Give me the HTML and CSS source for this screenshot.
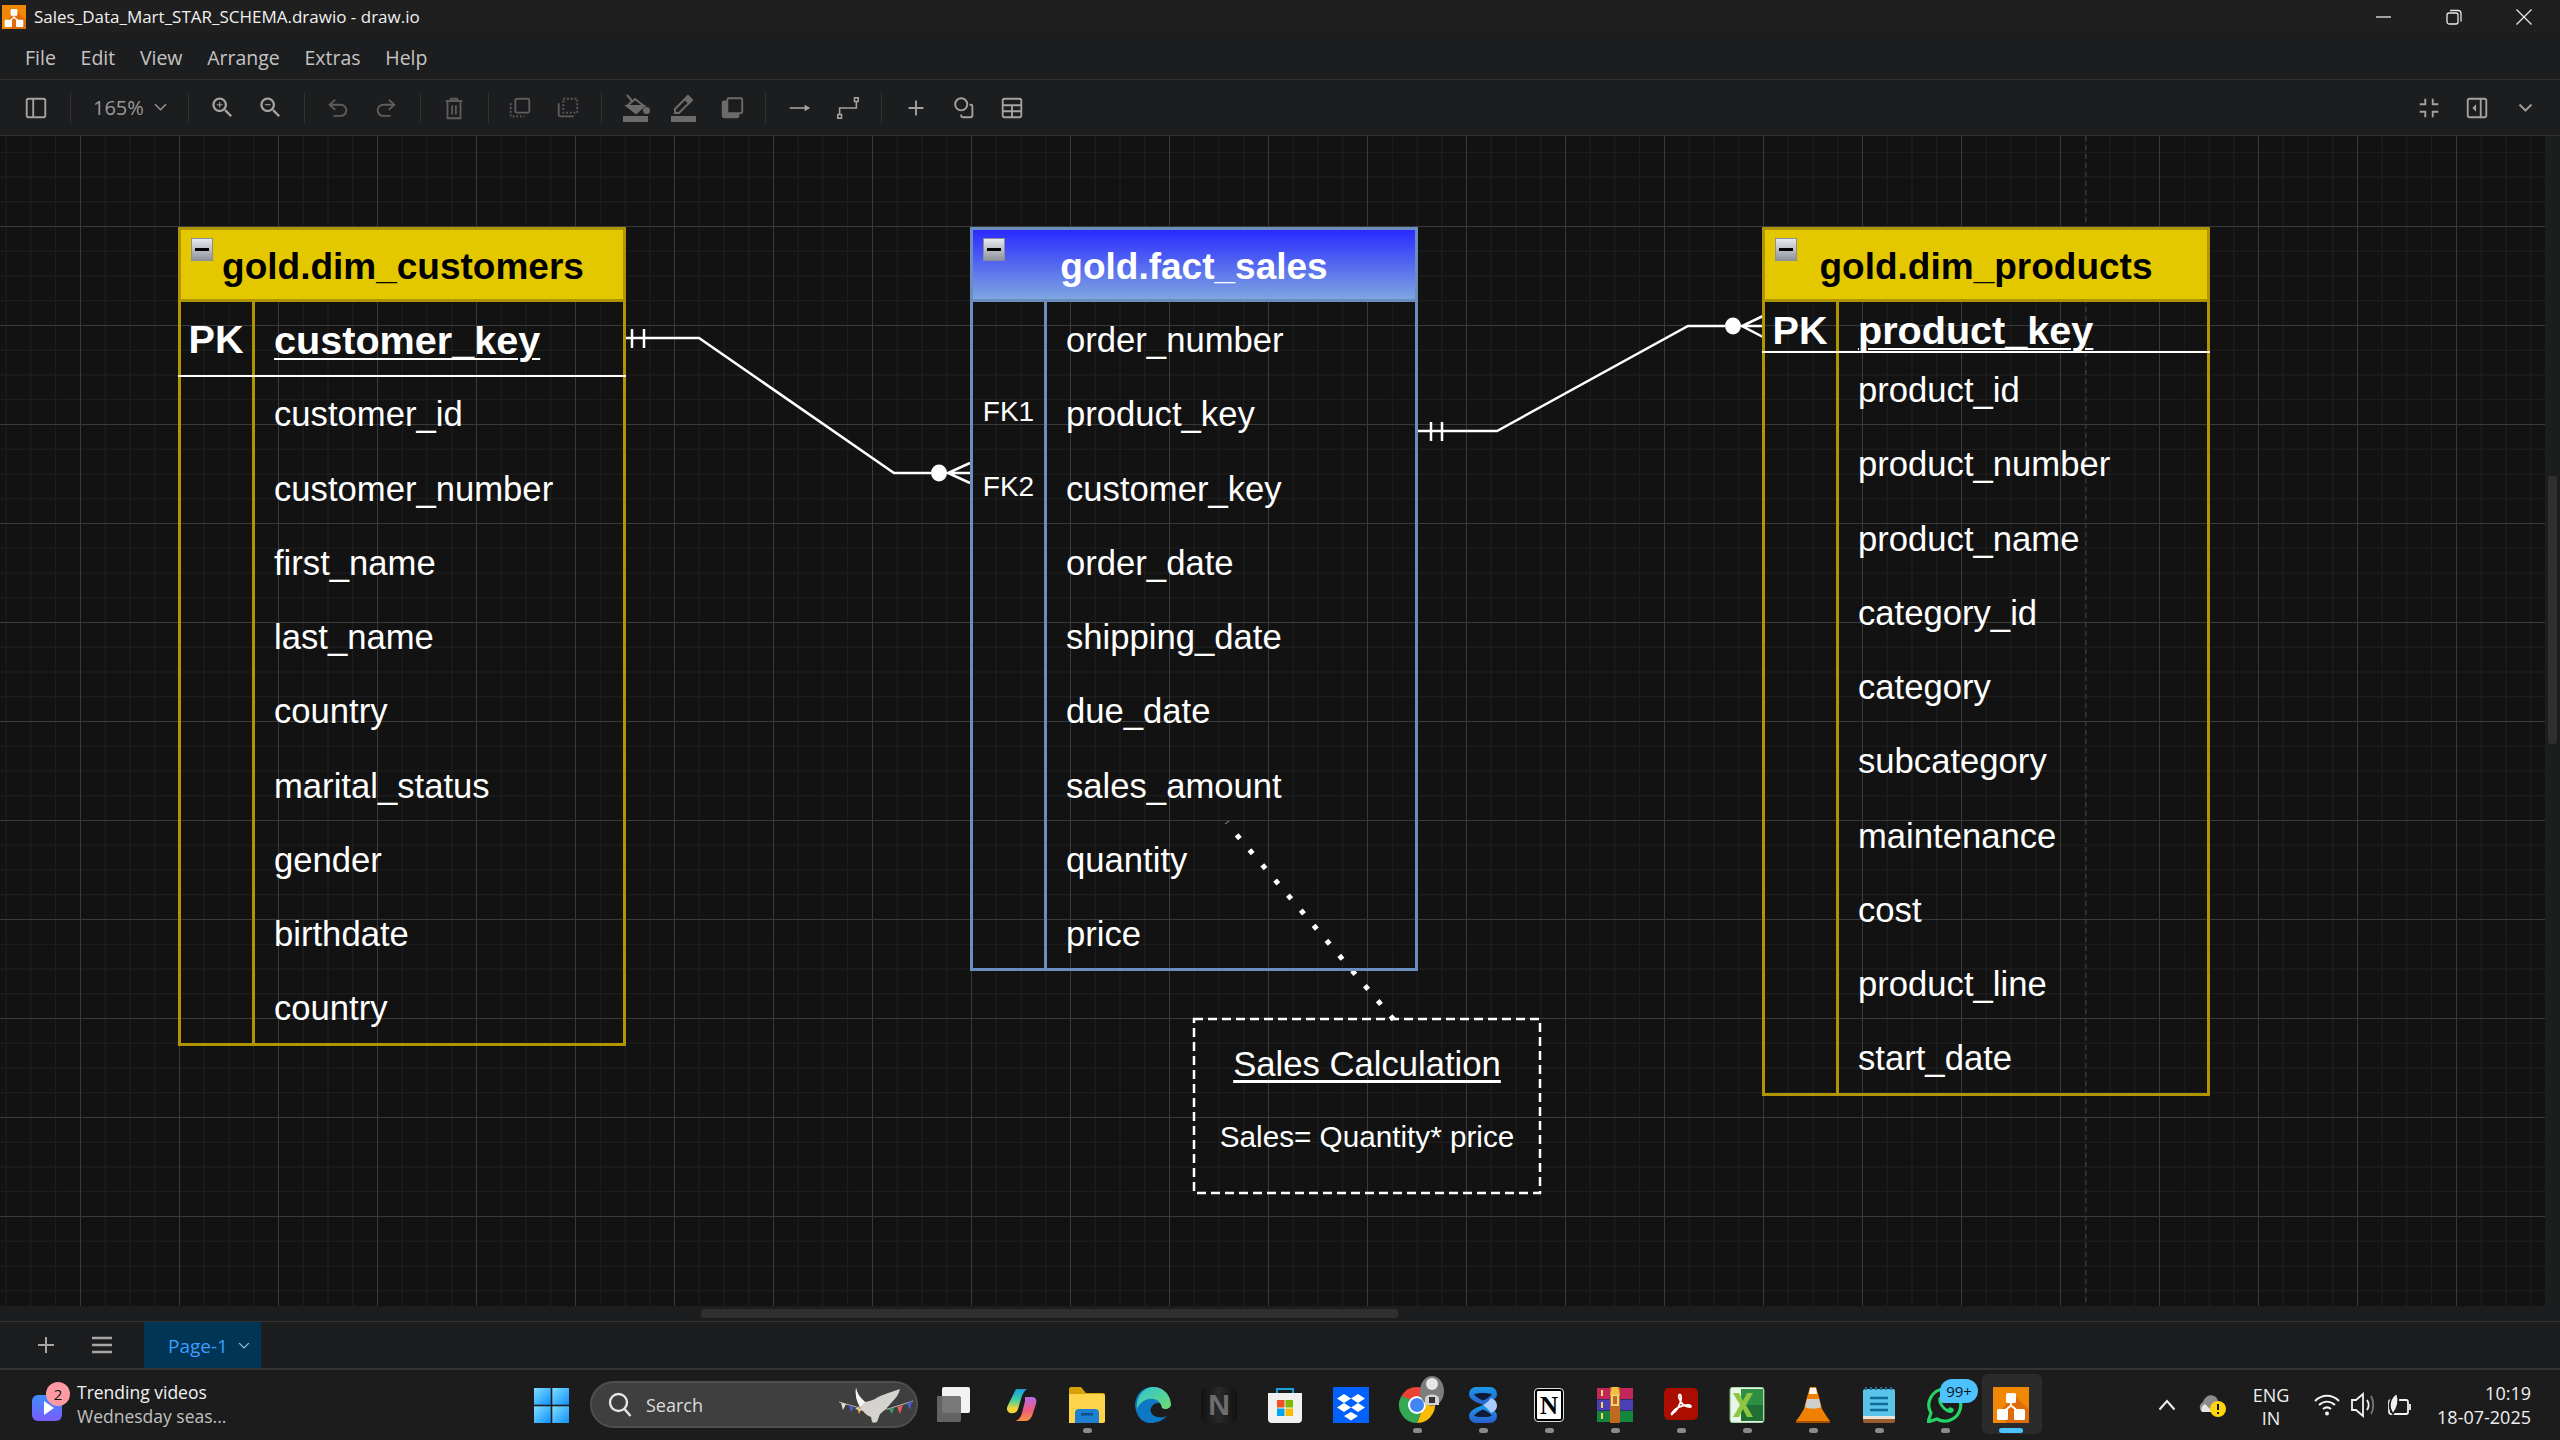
FILE: index.html
```html
<!DOCTYPE html>
<html lang="en">
<head>
<meta charset="utf-8">
<title>Sales_Data_Mart_STAR_SCHEMA.drawio - draw.io</title>
<link rel="stylesheet" href="styles.css">
</head>
<body>
<svg class="defs" width="0" height="0" aria-hidden="true">
  <defs>
    <symbol id="drawio" viewBox="0 0 36 36">
      <rect width="36" height="36" fill="#f08705"/>
      <path d="M36 36H14L5 27 15 15 18 5 36 23z" fill="#df6c0c"/>
      <path d="M18 12v6.500M18 18.500 10 25M18 18.500 26 25" stroke="#fff" stroke-width="1.800" fill="none"/>
      <rect x="13" y="6" width="10" height="10" rx="1.500" fill="#fff"/>
      <rect x="4" y="22" width="11" height="11" rx="1.500" fill="#fff"/>
      <rect x="21" y="22" width="11" height="11" rx="1.500" fill="#fff"/>
    </symbol>
    <linearGradient id="winlogo" x1="0" y1="0" x2="1" y2="1"><stop offset="0" stop-color="#7fe0ff"/><stop offset="1" stop-color="#0f8fff"/></linearGradient>
    <linearGradient id="copilotA" x1="0" y1="0" x2="0" y2="1"><stop offset="0" stop-color="#1b9de2"/><stop offset=".45" stop-color="#3fd0a0"/><stop offset=".8" stop-color="#f5d33b"/></linearGradient>
    <linearGradient id="copilotB" x1="0" y1="0" x2="0" y2="1"><stop offset="0" stop-color="#b56ce8"/><stop offset=".55" stop-color="#ef5c7a"/><stop offset="1" stop-color="#f8913c"/></linearGradient>
    <linearGradient id="edgeA" x1="0" y1="0" x2="1" y2="1"><stop offset="0" stop-color="#2fc3d8"/><stop offset="1" stop-color="#6fdc6c"/></linearGradient>
    <linearGradient id="blueX" x1="0" y1="0" x2="0" y2="1"><stop offset="0" stop-color="#1a9be8"/><stop offset="1" stop-color="#2a5fd0"/></linearGradient>
    <linearGradient id="newsG" x1="0" y1="0" x2="0" y2="1"><stop offset="0" stop-color="#3f8cff"/><stop offset="1" stop-color="#7a5cff"/></linearGradient>
  </defs>
</svg>

<div class="app">
  <header class="titlebar">
    <svg class="app-ico"><use href="#drawio"/></svg>
    <span class="title-text">Sales_Data_Mart_STAR_SCHEMA.drawio - draw.io</span>
    <div class="win-ctrls">
      <span class="win-btn"><svg width="16" height="16" viewBox="0 0 16 16"><path d="M0 8h15" stroke="#e8e8e8" stroke-width="1.300"/></svg></span>
      <span class="win-btn"><svg width="16" height="16" viewBox="0 0 16 16" fill="none" stroke="#e8e8e8" stroke-width="1.300"><rect x="1" y="4" width="11" height="11" rx="2"/><path d="M4 1.500h8a3 3 0 0 1 3 3v8"/></svg></span>
      <span class="win-btn"><svg width="16" height="16" viewBox="0 0 16 16"><path d="M.5.500l15 15M15.500.500l-15 15" stroke="#e8e8e8" stroke-width="1.300"/></svg></span>
    </div>
  </header>

  <nav class="menubar">
    <span class="menu-item">File</span>
    <span class="menu-item">Edit</span>
    <span class="menu-item">View</span>
    <span class="menu-item">Arrange</span>
    <span class="menu-item">Extras</span>
    <span class="menu-item">Help</span>
  </nav>

  <div class="toolbar">
    <span class="tb on"><svg viewBox="0 0 28 28" class="i"><rect x="4" y="4" width="20" height="20" rx="2"/><path d="M11 4v20"/></svg></span>
    <span class="sep"></span>
    <span class="zoom-label">165%<svg viewBox="0 0 14 10" class="chev"><path d="M1 1.500l6 6 6-6"/></svg></span>
    <span class="sep"></span>
    <span class="tb on"><svg viewBox="0 0 24 24" class="i f"><path d="M15.500 14h-.79l-.28-.27C15.410 12.590 16 11.110 16 9.500 16 5.910 13.090 3 9.500 3S3 5.910 3 9.500 5.910 16 9.500 16c1.610 0 3.090-.59 4.230-1.570l.27.28v.79l5 4.990L20.490 19l-4.990-5zm-6 0C7.010 14 5 11.990 5 9.500S7.010 5 9.500 5 14 7.010 14 9.500 11.990 14 9.500 14z"/><path d="M12 10h-2v2H9v-2H7V9h2V7h1v2h2v1z"/></svg></span>
    <span class="tb on"><svg viewBox="0 0 24 24" class="i f"><path d="M15.500 14h-.79l-.28-.27C15.410 12.590 16 11.110 16 9.500 16 5.910 13.090 3 9.500 3S3 5.910 3 9.500 5.910 16 9.500 16c1.610 0 3.090-.59 4.230-1.570l.27.28v.79l5 4.990L20.490 19l-4.990-5zm-6 0C7.010 14 5 11.990 5 9.500S7.010 5 9.500 5 14 7.010 14 9.500 11.990 14 9.500 14z"/><path d="M7 9h5v1H7z"/></svg></span>
    <span class="sep"></span>
    <span class="tb off"><svg viewBox="0 0 28 28" class="i"><path d="M11 5 5 10.500 11 16M5 10.500h12a6 6 0 0 1 0 12H9"/></svg></span>
    <span class="tb off"><svg viewBox="0 0 28 28" class="i"><path d="M17 5l6 5.500L17 16M23 10.500H11a6 6 0 0 0 0 12h8"/></svg></span>
    <span class="sep"></span>
    <span class="tb off"><svg viewBox="0 0 28 28" class="i"><path d="M5 6.500h18M10.500 6.500V4h7v2.500M7 6.500V25h14V6.500M12 11v10M16 11v10"/></svg></span>
    <span class="sep tight"></span>
    <span class="tb off"><svg viewBox="0 0 28 28" class="i"><rect x="9" y="4" width="15" height="15" rx="2"/><path class="dots" d="M4 9v14h15"/></svg></span>
    <span class="tb off"><svg viewBox="0 0 28 28" class="i"><rect class="dots" x="9" y="4" width="15" height="15"/><path d="M4 9v12a2 2 0 0 0 2 2h14"/></svg></span>
    <span class="sep"></span>
    <span class="tb on dim"><svg viewBox="0 0 28 28" class="i tall"><path d="M5 1l5 6"/><path d="M13 5 22 12 14 19 5 12z"/><path class="fillc" d="M5 12h17l-8 7z"/><circle class="fillc" cx="24.500" cy="16.500" r="2.500"/><rect class="fillc" x="2" y="23" width="23" height="4"/></svg></span>
    <span class="tb on dim"><svg viewBox="0 0 28 28" class="i tall"><path d="M5 19v-4L17 3l4 4L9 19z"/><path class="fillc" d="M15 5l4 4 3-3-4-4z"/><rect class="fillc" x="2" y="23" width="23" height="4"/></svg></span>
    <span class="tb on dim"><svg viewBox="0 0 28 28" class="i"><path class="fillc nost" d="M3 8a2 2 0 0 1 2-2h4v14h13v2a3 3 0 0 1-3 3H6a3 3 0 0 1-3-3z"/><rect x="9" y="3.500" width="16" height="16" rx="1.500"/></svg></span>
    <span class="sep"></span>
    <span class="tb on"><svg viewBox="0 0 28 28" class="i thin"><path d="M3 14h20"/><path class="fillc nost" d="M19 10.500l6 3.500-6 3.500z"/></svg></span>
    <span class="tb on"><svg viewBox="0 0 28 28" class="i thin"><rect x="3" y="21" width="4" height="4"/><rect x="21" y="3" width="4" height="4"/><path d="M5 21v-7h18V7"/></svg></span>
    <span class="sep"></span>
    <span class="tb on"><svg viewBox="0 0 28 28" class="i"><path d="M14 6v16M6 14h16"/></svg></span>
    <span class="tb on"><svg viewBox="0 0 28 28" class="i"><circle cx="11" cy="10" r="6.500"/><path d="M20 10.500h1.500a1.500 1.500 0 0 1 1.500 1.500v10a2 2 0 0 1-2 2h-8a2 2 0 0 1-2-2v-1"/></svg></span>
    <span class="tb on"><svg viewBox="0 0 28 28" class="i"><rect x="4" y="4" width="20" height="20" rx="2"/><path d="M4 11h20M4 17.500h20M14 11v13"/></svg></span>

    <div class="toolbar-right">
      <span class="tb on"><svg viewBox="0 0 28 28" class="i"><path d="M4 10h6V4M24 10h-6V4M4 18h6v6M24 18h-6v6"/></svg></span>
      <span class="tb on"><svg viewBox="0 0 28 28" class="i"><rect x="4" y="4" width="20" height="20" rx="2"/><path d="M18 4v20"/><path class="fillc nost" d="M13 10v8l-4-4z"/></svg></span>
      <span class="tb on"><svg viewBox="0 0 14 10" class="chev big"><path d="M1 1.500l6 6 6-6"/></svg></span>
    </div>
  </div>

  <main class="main">
    <div class="canvas">
      <svg class="wires" viewBox="0 136 2545 1170">
        <path class="page-break" d="M2086 136V1306"/>
        <g class="wire">
          <path d="M626 338H699L894 473H931"/>
          <path d="M632 329V348M644 329V348"/>
          <ellipse class="dot" cx="939" cy="473" rx="8" ry="8.500"/>
          <path d="M970 463 948 473 970 483M947 473H970"/>
          <path d="M1418 431H1497L1688 326H1725"/>
          <path d="M1431 422V441M1442 422V441"/>
          <ellipse class="dot" cx="1733" cy="326" rx="8" ry="8.500"/>
          <path d="M1763 316 1742 326 1763 337M1741 326H1763"/>
        </g>
        <path class="dotted" d="M1236 834 1395 1021"/>
        <path class="fleck" d="M1225 824l4-3"/>
        <rect class="note-box" x="1194" y="1019" width="346" height="174"/>
      </svg>

      <section class="tbl dim t-cust">
        <div class="tbl-head"><span class="collapse"></span>gold.dim_customers</div>
        <div class="rows">
          <div class="row pk"><span class="key">PK</span><span class="name">customer_key</span></div>
          <div class="row"><span class="key"></span><span class="name">customer_id</span></div>
          <div class="row"><span class="key"></span><span class="name">customer_number</span></div>
          <div class="row"><span class="key"></span><span class="name">first_name</span></div>
          <div class="row"><span class="key"></span><span class="name">last_name</span></div>
          <div class="row"><span class="key"></span><span class="name">country</span></div>
          <div class="row"><span class="key"></span><span class="name">marital_status</span></div>
          <div class="row"><span class="key"></span><span class="name">gender</span></div>
          <div class="row"><span class="key"></span><span class="name">birthdate</span></div>
          <div class="row"><span class="key"></span><span class="name">country</span></div>
        </div>
      </section>

      <section class="tbl fact t-fact">
        <div class="tbl-head"><span class="collapse"></span>gold.fact_sales</div>
        <div class="rows">
          <div class="row"><span class="key"></span><span class="name">order_number</span></div>
          <div class="row"><span class="key fk">FK1</span><span class="name">product_key</span></div>
          <div class="row"><span class="key fk">FK2</span><span class="name">customer_key</span></div>
          <div class="row"><span class="key"></span><span class="name">order_date</span></div>
          <div class="row"><span class="key"></span><span class="name">shipping_date</span></div>
          <div class="row"><span class="key"></span><span class="name">due_date</span></div>
          <div class="row"><span class="key"></span><span class="name">sales_amount</span></div>
          <div class="row"><span class="key"></span><span class="name">quantity</span></div>
          <div class="row"><span class="key"></span><span class="name">price</span></div>
        </div>
      </section>

      <section class="tbl dim t-prod">
        <div class="tbl-head"><span class="collapse"></span>gold.dim_products</div>
        <div class="rows">
          <div class="row pk short"><span class="key">PK</span><span class="name">product_key</span></div>
          <div class="row"><span class="key"></span><span class="name">product_id</span></div>
          <div class="row"><span class="key"></span><span class="name">product_number</span></div>
          <div class="row"><span class="key"></span><span class="name">product_name</span></div>
          <div class="row"><span class="key"></span><span class="name">category_id</span></div>
          <div class="row"><span class="key"></span><span class="name">category</span></div>
          <div class="row"><span class="key"></span><span class="name">subcategory</span></div>
          <div class="row"><span class="key"></span><span class="name">maintenance</span></div>
          <div class="row"><span class="key"></span><span class="name">cost</span></div>
          <div class="row"><span class="key"></span><span class="name">product_line</span></div>
          <div class="row"><span class="key"></span><span class="name">start_date</span></div>
        </div>
      </section>

      <div class="note">
        <div class="note-title">Sales Calculation</div>
        <div class="note-body">Sales= Quantity* price</div>
      </div>
    </div>
    <div class="vstrip"><span class="vthumb"></span></div>
  </main>

  <div class="hstrip"><span class="hthumb"></span></div>

  <div class="tabs">
    <span class="tab-btn"><svg viewBox="0 0 20 20" width="20" height="20"><path d="M10 2v16M2 10h16" stroke="#a6a6a6" stroke-width="2"/></svg></span>
    <span class="tab-btn"><svg viewBox="0 0 22 20" width="22" height="20"><path d="M1 3h20M1 10h20M1 17h20" stroke="#a6a6a6" stroke-width="2.400"/></svg></span>
    <span class="page-tab">Page-1<svg viewBox="0 0 14 10" class="chev tabchev"><path d="M1 1.500l6 6 6-6"/></svg></span>
  </div>

  <footer class="taskbar">
    <div class="news">
      <span class="news-ico">
        <svg width="30" height="26" viewBox="0 0 30 26"><rect width="30" height="26" rx="6" fill="url(#newsG)"/><path d="M12 6l10 7-10 7z" fill="#fff"/></svg>
        <span class="news-badge">2</span>
      </span>
      <span class="news-text"><span class="news-a">Trending videos</span><span class="news-b">Wednesday seas...</span></span>
    </div>
    <svg class="winlogo" viewBox="0 0 35 35"><rect width="16.700" height="16.700" fill="url(#winlogo)"/><rect x="18.300" width="16.700" height="16.700" fill="url(#winlogo)"/><rect y="18.300" width="16.700" height="16.700" fill="url(#winlogo)"/><rect x="18.300" y="18.300" width="16.700" height="16.700" fill="url(#winlogo)"/></svg>
    <div class="search">
      <svg width="26" height="28" viewBox="0 0 26 28" fill="none" stroke="#e6e6e6" stroke-width="2.400"><circle cx="11.500" cy="11.500" r="8.500"/><path d="M17.500 18l6 7"/></svg>
      <span class="search-text">Search</span>
      <svg class="dove" width="76" height="36" viewBox="0 0 76 36">
        <path d="M1 14 22 20 50 21 75 13" fill="none" stroke="#bbb" stroke-width="1"/>
        <path d="M3 15l2 7 3-6z" fill="#e8e0d0"/><path d="M11 17l2 7 3-5z" fill="#4a5bd0"/><path d="M19 19l2 7 3-6z" fill="#f0b030"/>
        <path d="M51 21l3 5 2-6z" fill="#3aa060"/><path d="M59 19l3 7 3-9z" fill="#e05a5a"/><path d="M69 15l3 7 2-9z" fill="#4a5bd0"/>
        <path d="M18 0c1 5 4 10 9 14 5-1 9-2 13-5 6-3 14-5 22-8-1 5-4 9-8 13-4 5-8 9-12 12l-3 8c-2 1-4 1-5 0l-1-5c-3-1-6-3-8-6l-4-1-4-1 5-3c-3-4-5-11-4-18z" fill="#d4d3ce"/>
        <path d="M18 0c1 5 4 10 9 14l-5 5c-3-5-5-12-4-19z" fill="#f5f5f2"/>
        <path d="M23 19l-4 1 4 1z" fill="#e09030"/>
      </svg>
    </div>
    <div class="task-icons">
      <span class="tk"><svg class="ico" viewBox="0 0 36 36"><rect x="5" y="0" width="28" height="26" rx="2" fill="#f2f2f2"/><rect x="-1" y="9" width="25" height="26" rx="2" fill="#6b6b6b" fill-opacity=".9"/></svg></span>
      <span class="tk"><svg class="ico" viewBox="0 0 36 36"><path d="M14 2h10c-3 2-5 6-6 10l-3 10c-1 4-5 5-8 4-3-1-4-4-2-8l6-12c1-2.500 2-4 3-4z" fill="url(#copilotA)"/><path d="M22 10h7c4 0 5 3 4 7l-4 12c-2 4-4 5-7 5H12c4-1 6-4 7-8l3-12z" fill="url(#copilotB)"/></svg></span>
      <span class="tk on-dot"><svg class="ico" viewBox="0 0 36 36"><path d="M0 2a2 2 0 0 1 2-2h10l5 6h17a2 2 0 0 1 2 2v27H0z" fill="#d9a108"/><path d="M0 7h34a2 2 0 0 1 2 2v25a2 2 0 0 1-2 2H0z" fill="#ffd44d"/><path d="M6 36V26a4 4 0 0 1 4-4h16a4 4 0 0 1 4 4v10z" fill="#1f7fd0"/><rect x="12" y="26" width="12" height="2.500" fill="#0d4f8c"/></svg></span>
      <span class="tk"><svg class="ico" viewBox="0 0 36 36"><path d="M18 0C8 0 1 7 0 17c0 11 7 19 15 19 7 0 12-2 17-7-5 2-12 2-15-2-4-5 1-11 6-11 5 0 7 4 7 4h5C36 8 28 0 18 0z" fill="#0f78c4"/><path d="M18 0c9 0 17 6 18 17 0 5-6 6-9 4-1-7-7-10-13-9S3 18 2 22C1 9 9 0 18 0z" fill="url(#edgeA)"/></svg></span>
      <span class="tk"><span class="nblack">N</span></span>
      <span class="tk"><svg class="ico" viewBox="0 0 36 36"><path d="M10 7V2h16v5" fill="none" stroke="#1aa0dc" stroke-width="2"/><path d="M1 6h34v26a4 4 0 0 1-4 4H5a4 4 0 0 1-4-4z" fill="#f1f1f1"/><rect x="10" y="13" width="7.500" height="7.500" fill="#f25022"/><rect x="18.500" y="13" width="7.500" height="7.500" fill="#7fba00"/><rect x="10" y="21.500" width="7.500" height="7.500" fill="#00a4ef"/><rect x="18.500" y="21.500" width="7.500" height="7.500" fill="#ffb900"/></svg></span>
      <span class="tk"><svg class="ico" viewBox="0 0 36 36"><rect width="36" height="36" fill="#0061fe"/><path d="M11 7l7 4.500-7 4.500-7-4.500zM25 7l7 4.500-7 4.500-7-4.500zM11 16l7 4.500-7 4.500-7-4.500zM25 16l7 4.500-7 4.500-7-4.500zM18 25l7 4-7 4.500-7-4.500z" fill="#fff"/></svg></span>
      <span class="tk on-dot"><svg class="ico over" viewBox="0 0 36 36"><path d="M18 18V0a18 18 0 0 0-15.600 9z" fill="#ea4335"/><path d="M18 0a18 18 0 0 1 15.600 9H18z" fill="#ea4335"/><path d="M33.600 9A18 18 0 0 1 18 36l7-18z" fill="#fbbc05"/><path d="M2.400 9A18 18 0 0 0 18 36l7-18z" fill="#34a853"/><circle cx="18" cy="18" r="9" fill="#fff"/><circle cx="18" cy="18" r="7" fill="#4285f4"/><ellipse cx="33" cy="4" rx="12" ry="15" fill="#7d7d7d"/><ellipse cx="33" cy="-3" rx="6" ry="6" fill="#e6e6e6"/><path d="M26 12c0-6 14-6 14 0v6H26z" fill="#d4d4d4"/><rect x="30" y="10" width="6" height="6" fill="#333"/></svg></span>
      <span class="tk on-dot"><svg class="ico" viewBox="0 0 36 36"><path d="M4 7a7 7 0 0 1 7-7h14a7 7 0 0 1 7 7c0 5-6 8-14 11-8-3-14-6-14-11z" fill="url(#blueX)"/><path d="M4 29a7 7 0 0 0 7 7h14a7 7 0 0 0 7-7c0-5-6-8-14-11-8 3-14 6-14 11z" fill="url(#blueX)"/><path d="M9 7.500c3-2 15-2 18 0-3 3-6 5-9 6-3-1-6-3-9-6zM9 28.500c3 2 15 2 18 0-3-3-6-5-9-6-3 1-6 3-9 6z" fill="#101a38"/><path d="M26 11c5 2 6 5 6 8s-2 5-6 7c-2-3-5-6-8-8 3-2 6-4 8-7z" fill="#a8ccff"/></svg></span>
      <span class="tk on-dot"><span class="nwhite">N</span></span>
      <span class="tk on-dot"><svg class="ico" viewBox="0 0 36 36"><rect y="1" width="36" height="11" fill="#c3265a"/><rect y="12.500" width="36" height="11" fill="#4a3fb5"/><rect y="24" width="36" height="11" fill="#14863c"/><rect x="13" y="0" width="10" height="36" fill="#c06a20"/><rect x="15" y="8" width="6" height="10" fill="none" stroke="#f1d480" stroke-width="2"/><path d="M15 0h6l2 8H13z" fill="#f0c040"/><path d="M5 3v6M5 15v6M5 26v6" stroke="#f4d860" stroke-width="2"/></svg></span>
      <span class="tk on-dot"><svg class="ico" viewBox="0 0 36 36"><rect x="1" y="1" width="34" height="32" rx="5" fill="#ab0d00"/><path d="M10 26c4-2 9-11 8-17-1-3-3-1-2 2 2 6 6 9 11 9 2 0 1-2-2-2-6 0-13 3-16 8-1 2 0 2 1 0z" fill="none" stroke="#fff" stroke-width="1.800"/></svg></span>
      <span class="tk on-dot"><svg class="ico" viewBox="0 0 36 36"><rect x="1" y="0" width="34" height="36" rx="3" fill="#eaf5ea" stroke="#6fb36f"/><path d="M12 2h22v32H12z" fill="#2e8f44"/><path d="M12 18h22v16H12z" fill="#1f6e34"/><path d="M4 6h6l4 8 4-8h6l-7 12 7 12h-6l-4-8-4 8H4l7-12z" fill="#8fc640"/></svg></span>
      <span class="tk on-dot"><svg class="ico" viewBox="0 0 36 36"><path d="M15 0h6l3 10 3 12 5 8 3 4v2H1v-2l3-4 5-8 3-12z" fill="#f08000"/><path d="M12 12h12l2 8c-4 2-12 2-16 0z" fill="#cfcfcf"/><path d="M15 1l-1 6h8l-1-6z" fill="#f6f6f6"/><path d="M1 34h34v2H1z" fill="#a85000"/></svg></span>
      <span class="tk on-dot"><svg class="ico" viewBox="0 0 36 36"><path d="M4 2h28a2 2 0 0 1 2 2v26H2V4a2 2 0 0 1 2-2z" fill="#5bc2e8"/><path d="M2 29h32v3H2z" fill="#e9e4d8"/><path d="M2 32h32v2a2 2 0 0 1-2 2H4a2 2 0 0 1-2-2z" fill="#9c5b2e"/><path d="M9 11h18M9 17h18M9 23h18" stroke="#0f6e99" stroke-width="2.400"/><path d="M5 0v3M10 0v3M15 0v3M20 0v3M25 0v3M30 0v3" stroke="#176e9b" stroke-width="2"/></svg></span>
      <span class="tk on-dot wa"><svg class="ico" viewBox="0 0 36 36"><path d="M18 2a16 16 0 0 0-14 24L1 35l9-3a16 16 0 1 0 8-30z" fill="none" stroke="#25d366" stroke-width="3.200"/><path d="M12 10c-2 3 0 8 4 12s8 5 10 3l1-3-4-2-2 2c-3-1-5-4-6-6l2-2-2-4z" fill="#25d366"/></svg><span class="wa-badge">99+</span></span>
      <span class="tk active"><svg class="ico"><use href="#drawio"/></svg><i class="bar"></i></span>
    </div>
    <div class="tray">
      <svg class="caret" width="18" height="12" viewBox="0 0 18 12"><path d="M1.500 10.500 9 2l7.500 8.500" fill="none" stroke="#f2f2f2" stroke-width="2"/></svg>
      <svg class="warn" width="28" height="26" viewBox="0 0 28 26"><path d="M3 20a6 6 0 0 1 1-10C6 4 11 2 15 4c3 1 4 4 4 6l-4 10z" fill="#8c8c8c"/><path d="M3 20a6 6 0 0 1 3-8l8 8z" fill="#e6e6e6"/><circle cx="19" cy="17" r="8" fill="#ffd60a"/><path d="M19 12v6M19 20v2" stroke="#111" stroke-width="2"/></svg>
      <div class="lang"><span>ENG</span><span>IN</span></div>
      <svg class="wifi" width="26" height="26" viewBox="0 0 26 26" fill="none" stroke="#f2f2f2" stroke-width="2"><path d="M1 9c7-7 17-7 24 0M5 13c5-4.500 11-4.500 16 0M9 17c2.500-2 5.500-2 8 0"/><circle cx="13" cy="21.500" r="2" fill="#f2f2f2" stroke="none"/></svg>
      <svg class="vol" width="26" height="30" viewBox="0 0 26 30" fill="none" stroke="#f2f2f2" stroke-width="1.800"><path d="M2 10h4l7-6v22l-7-6H2z"/><path d="M17 10c2 3 2 7 0 10" /><path d="M21 6c3 5 3 13 0 18" stroke="#777"/></svg>
      <svg class="batt" width="26" height="28" viewBox="0 0 26 28" fill="none" stroke="#f2f2f2" stroke-width="1.800"><rect x="3" y="9" width="19" height="14" rx="2"/><path d="M24 13v6"/><path d="M7 23C1 16 4 6 11 2c2 6 2 14-4 21z" fill="#f2f2f2" stroke="#1c1c1c"/></svg>
      <div class="clock"><span>10:19</span><span>18-07-2025</span></div>
    </div>
  </footer>
</div>
</body>
</html>
```

FILE: styles.css
```css
* { box-sizing: border-box; }
html, body { margin: 0; height: 100%; background: #1c1d1f; overflow: hidden; }
body { font-family: "Open Sans", "Noto Sans", sans-serif; color: #e6e6e6; }
.defs { position: absolute; }
.app { width: 2560px; height: 1440px; display: flex; flex-direction: column; }

/* title bar */
.titlebar { height: 33px; background: #1f1f1f; display: flex; align-items: center; padding-left: 2px; }
.app-ico { width: 24px; height: 24px; }
.title-text { margin-left: 8px; font-size: 17px; color: #f0f0f0; white-space: nowrap; }
.win-ctrls { margin-left: auto; display: flex; margin-right: 1px; }
.win-btn { width: 70px; height: 33px; display: flex; align-items: center; justify-content: center; }

/* menu */
.menubar { height: 47px; background: #1c1d1f; border-bottom: 1px solid #333; display: flex; align-items: center; padding-left: 25px; padding-top: 2px; gap: 24.700px; }
.menu-item { font-size: 19.5px; color: #c4c4c4; }

/* toolbar */
.toolbar { height: 56px; background: #1c1d1f; border-bottom: 1px solid #333; display: flex; align-items: center; padding-left: 12px; }
.tb { width: 48px; height: 48px; display: flex; align-items: center; justify-content: center; flex: none; }
.on { color: #a3a3a3; }
.off { color: #5d5d5d; }
.dim { color: #6b6b6b; }
.sep { width: 1px; height: 30px; background: #333; margin: 0 9.5px; flex: none; }
.sep.tight { margin-right: 7px; }
.i { width: 26px; height: 26px; fill: none; stroke: currentColor; stroke-width: 2; }
.i.tall { width: 28px; height: 28px; }
.i.f { fill: currentColor; stroke: none; width: 27px; height: 27px; }
.i.thin { stroke-width: 1.700; }
.dots { stroke-dasharray: 2 2; }
.fillc { fill: currentColor; }
.nost { stroke: none; }
.zoom-label { width: 98px; padding-left: 13px; font-size: 20px; color: #9a9a9a; display: flex; align-items: center; gap: 10px; flex: none; }
.chev { width: 13px; height: 9px; fill: none; stroke: #9a9a9a; stroke-width: 1.500; }
.chev.big { width: 15px; height: 10px; stroke-width: 2; }
.toolbar-right { margin-left: auto; display: flex; margin-right: 11px; }

/* canvas */
.main { flex: 1; display: flex; min-height: 0; }
.canvas {
  flex: 1; position: relative; overflow: hidden; background-color: #121212;
  background-image:
    linear-gradient(to right, #3a3a3a 1px, transparent 1px),
    linear-gradient(to bottom, #3a3a3a 1px, transparent 1px),
    linear-gradient(to right, #202020 1px, transparent 1px),
    linear-gradient(to bottom, #202020 1px, transparent 1px);
  background-size: 99px 99px, 99px 99px, 24.75px 24.75px, 24.75px 24.75px;
  background-position: 80px 90px, 80px 90px, 80px 90px, 80px 90px;
}
.vstrip { width: 15px; background: #1c1d1f; position: relative; }
.vthumb { position: absolute; left: 3px; top: 340px; width: 9px; height: 268px; background: #2f2f2f; border-radius: 3px; }
.hstrip { height: 16px; background: #1c1d1f; border-bottom: 1px solid #333; position: relative; }
.hthumb { position: absolute; left: 701px; top: 3px; width: 697px; height: 9px; background: #2f2f2f; border-radius: 3px; }

.wires { position: absolute; inset: 0; width: 2545px; height: 1170px; }
.page-break { stroke: #444; stroke-width: 1; stroke-dasharray: 5 4; fill: none; }
.wire path { fill: none; stroke: #fff; stroke-width: 2.500; }
.wire .dot { fill: #fff; }
.dotted { stroke: #fff; stroke-width: 5; stroke-dasharray: 5 14.800; stroke-dashoffset: -1; fill: none; }
.fleck { stroke: #999; stroke-width: 1; }
.note-box { fill: none; stroke: #fff; stroke-width: 2.500; stroke-dasharray: 9 5; }

/* tables */
.tbl { position: absolute; top: 91px; width: 448px; border: 3px solid var(--c); font-family: "Liberation Sans", Arial, sans-serif; color: #fff; }
.tbl.dim { --c: #b09500; }
.tbl.fact { --c: #6c8ebf; }
.t-cust { left: 178px; }
.t-fact { left: 970px; }
.t-prod { left: 1762px; }
.tbl-head { height: 72px; position: relative; display: flex; align-items: center; justify-content: center; padding-top: 5px; padding-left: 2px; font-size: 37px; font-weight: 700; border-bottom: 3px solid var(--c); background: #e3c800; color: #000; }
.fact .tbl-head { background: linear-gradient(to bottom, #2a2aff, #7ea6e0); color: #fff; }
.t-prod .tbl-head, .t-fact .tbl-head { padding-left: 0; }
.collapse { position: absolute; left: 10px; top: 8px; width: 22px; height: 23px; border: 1px solid #8a8f99; background: linear-gradient(to bottom, #e6e9ee, #8f949c); }
.collapse::after { content: ""; position: absolute; left: 3px; right: 3px; top: 9px; height: 3px; background: #000; }
.rows { margin-bottom: -2px; }
.row { height: 74.25px; display: grid; grid-template-columns: 74px 1fr; }
.key { border-right: 3px solid var(--c); display: flex; align-items: center; justify-content: center; }
.fk { font-size: 28px; padding-bottom: 2px; }
.name { display: flex; align-items: center; padding-left: 19px; padding-top: 3px; font-size: 34.65px; white-space: nowrap; }
.row.pk { height: 75px; margin: 0 -3px -.75px; grid-template-columns: 77px 1fr; border-bottom: 2px solid #fff; font-size: 39.6px; font-weight: 700; position: relative; }
.row.pk .key { padding-left: 2px; padding-top: 2px; }
.row.pk .name { font-size: 39.6px; font-weight: 700; text-decoration: underline; text-decoration-thickness: 2px; text-underline-offset: 4px; }
.row.pk.short { height: 51px; margin-bottom: -1px; overflow: hidden; }
.row.pk.short .key, .row.pk.short .name { padding-top: 0; height: 59px; margin-top: -1px; }

/* note */
.note { position: absolute; left: 1194px; top: 883px; width: 346px; height: 174px; display: flex; flex-direction: column; align-items: center; font-family: "Liberation Sans", Arial, sans-serif; color: #fff; }
.note-title { font-size: 34.65px; line-height: 40px; margin-top: 25px; text-decoration: underline; text-decoration-thickness: 3px; text-underline-offset: 4px; }
.note-body { font-size: 29.7px; line-height: 36px; margin-top: 35px; }

/* tabs */
.tabs { height: 46px; background: #1c1d1f; display: flex; align-items: stretch; }
.tab-btn { display: flex; align-items: center; justify-content: center; flex: none; }
.tab-btn:nth-child(1) { width: 45px; margin-left: 23px; }
.tab-btn:nth-child(2) { width: 45px; margin-left: 11px; margin-right: 20px; }
.page-tab { width: 117px; background: #003555; color: #3c9dff; font-size: 19px; display: flex; align-items: center; padding-left: 24px; padding-top: 2px; gap: 10px; }
.tabchev { stroke: #9cc4e4; width: 12px; height: 8px; }

/* taskbar */
.taskbar { height: 72px; background: #1c1c1c; border-top: 2px solid #333; display: flex; padding-left: 32px; align-items: stretch; }
.news { width: 502px; display: flex; align-items: center; flex: none; }
.news-ico { position: relative; width: 30px; height: 26px; margin-top: 5px; }
.news-ico svg { display: block; }
.news-badge { position: absolute; left: 14px; top: -13px; width: 24px; height: 24px; border-radius: 50%; background: #ff9aa2; color: #111; font-size: 15px; line-height: 24px; text-align: center; }
.news-text { margin-left: 15px; margin-top: -2px; display: flex; flex-direction: column; font-size: 17.5px; line-height: 24px; }
.news-a { color: #f2f2f2; }
.news-b { color: #c0c0c0; }
.winlogo { width: 35px; height: 35px; align-self: center; flex: none; }
.search { width: 328px; height: 47px; margin-left: 21px; align-self: center; margin-top: -1px; background: #3f3f3f; border: 2px solid #4f4f4f; border-radius: 24px; display: flex; align-items: center; padding-left: 15px; position: relative; flex: none; }
.search-text { margin-left: 13px; font-size: 18px; color: #dcdcdc; }
.dove { position: absolute; right: 2px; top: 5px; }
.task-icons { display: flex; margin-left: 4px; flex: none; }
.tk { width: 66px; height: 70px; padding-top: 17px; display: flex; flex-direction: column; align-items: center; position: relative; }
.ico { width: 36px; height: 36px; display: block; flex: none; position: relative; }
.ico.over { overflow: visible; }
.on-dot::after { content: ""; position: absolute; left: 29px; top: 58px; width: 9px; height: 5px; border-radius: 3px; background: #8a8a8a; }
.active::before { content: ""; position: absolute; left: 4px; right: 2px; top: 4px; bottom: 6px; background: #2b2b2b; border-radius: 6px; }
.bar { position: absolute; left: 21px; top: 58px; width: 24px; height: 5px; border-radius: 3px; background: #4cc2ff; }
.nblack { width: 36px; height: 36px; border-radius: 6px; background: linear-gradient(to right, #111, #2a2a2a 50%, #111); color: #6e6e6e; font: 700 30px/36px "Liberation Sans", sans-serif; text-align: center; }
.nwhite { width: 28px; height: 32px; margin-top: 2px; background: #fff; border: 2px solid #000; outline: 1px solid #ddd; border-radius: 3px; color: #000; font: 700 25px/29px "Liberation Serif", serif; text-align: center; }
.wa-badge { position: absolute; left: 28px; top: 9px; width: 38px; height: 24px; border-radius: 12px 12px 12px 4px; background: #4cc2ff; color: #111; font-size: 15px; line-height: 24px; text-align: center; }
.tray { flex: 1; display: flex; align-items: center; padding-right: 29px; }
.tray svg { flex: none; display: block; }
.caret { margin-left: 114px; }
.warn { margin-left: 23px; }
.lang { width: 60px; margin-left: 14px; margin-top: 3px; display: flex; flex-direction: column; align-items: center; font-size: 18px; line-height: 23px; color: #f0f0f0; }
.wifi { margin-left: 13px; }
.vol { margin-left: 10px; }
.batt { margin-left: 10px; }
.clock { margin-left: auto; display: flex; flex-direction: column; align-items: flex-end; font-size: 18px; line-height: 24px; color: #f0f0f0; }
```
